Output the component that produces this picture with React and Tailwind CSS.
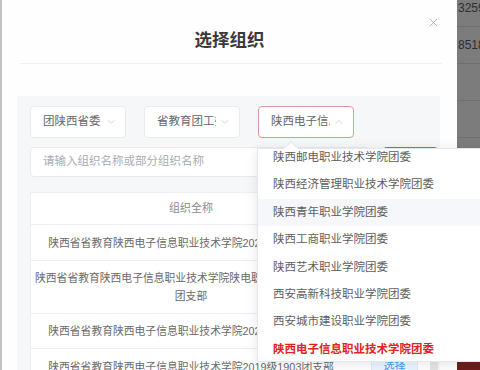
import { ChevronDown, ChevronUp, X } from 'lucide-react'

const font = "font-['Liberation_Sans','Noto_Sans_CJK_SC',sans-serif]"

const rows = [
    { h: 'h-[36px]', lines: ['陕西省省教育陕西电子信息职业技术学院2020级2001团支部'] },
    { h: 'h-[53px]', lines: ['陕西省省教育陕西电子信息职业技术学院陕电职院青年志愿者协会', '团支部'] },
    { h: 'h-[35px]', lines: ['陕西省省教育陕西电子信息职业技术学院2021级2101团支部'] },
    { h: 'h-[36px]', lines: ['陕西省省教育陕西电子信息职业技术学院2019级1903团支部'] },
]

const options = [
    '陕西邮电职业技术学院团委',
    '陕西经济管理职业技术学院团委',
    '陕西青年职业学院团委',
    '陕西工商职业学院团委',
    '陕西艺术职业学院团委',
    '西安高新科技职业学院团委',
    '西安城市建设职业学院团委',
    '陕西电子信息职业技术学院团委',
]

function Select({ label, open }) {
    return (
        <div className={`w-[96px] h-[32px] bg-white rounded-[4px] border flex items-center pl-[12px] pr-[8px] ${open ? 'border-[#dd9a9a]' : 'border-[#ebebeb]'}`}>
            <span className="flex-1 mr-[3px] overflow-hidden whitespace-nowrap text-[11.5px] text-[#666]">{label}</span>
            {open
                ? <ChevronUp className="w-[12px] h-[12px] shrink-0 text-[#c0c4cc]" strokeWidth={1.5} />
                : <ChevronDown className="w-[12px] h-[12px] shrink-0 text-[#c0c4cc]" strokeWidth={1.5} />}
        </div>
    )
}

export default function App() {
    return (
        <div className={`w-[480px] h-[370px] relative overflow-hidden flex bg-white ${font}`}>
            <div className="w-[2px] shrink-0 bg-[#c2c2c2]" />

            {/* Modal */}
            <div className="w-[455px] shrink-0 flex flex-col bg-[#fefefe] overflow-hidden">
                <div className="h-[63px] shrink-0 relative flex justify-center pt-[29px]">
                    <h2 className="text-[17.5px] leading-[22px] font-bold text-[#3a3a3a]">选择组织</h2>
                    <X className="absolute right-[17px] top-[16px] w-[13px] h-[13px] text-[#a6a6a6]" strokeWidth={1.5} />
                </div>
                <div className="ml-[18px] mr-[15px] h-px shrink-0 bg-[#efefef]" />

                <div className="mt-[32px] ml-[15px] w-[423px] shrink-0 bg-[#f6f7f9] pt-[10px] pl-[13px] pr-[2px]">
                    <div className="flex gap-[18px]">
                        <Select label="团陕西省委" />
                        <Select label="省教育团工委" />
                        <Select label="陕西电子信息职业技术学院团委" open />
                    </div>

                    <div className="flex mt-[9px] h-[30px]">
                        <div className="w-[340px] bg-white rounded-[4px] border border-[#ebebeb] flex items-center pl-[12px] text-[11.5px] text-[#a8abb2]">
                            请输入组织名称或部分组织名称
                        </div>
                        <div className="ml-auto w-[55px] bg-[#409eff] rounded-[4px] border-t-2 border-[#3a8ee6]" />
                    </div>

                    <div className="mt-[15px] bg-white border-l border-t border-[#ebeef5]">
                        <div className="grid grid-cols-[320px_1fr] h-[32px] border-b border-[#ebeef5] items-center text-[11px] text-[#8a8a8a]">
                            <div className="text-center">组织全称</div>
                            <div className="text-center">操作</div>
                        </div>
                        {rows.map((r, i) => (
                            <div key={i} className={`grid grid-cols-[320px_1fr] ${r.h} border-b border-[#ebeef5] items-center`}>
                                <div className="text-center text-[10.8px] leading-[18px] text-[#6a6a6a] whitespace-nowrap overflow-hidden px-[4px]">
                                    {r.lines.map((l, j) => <div key={j}>{l}</div>)}
                                </div>
                                <div className="flex items-center gap-[12px] pl-[20px]">
                                    <span className="w-[47px] h-[24px] rounded-[3px] bg-[#ecf5ff] border border-[#d9ecff] text-[#409eff] text-[11px] flex items-center justify-center">选择</span>
                                    <span className="w-[8px] h-[24px] bg-[#e4e4e4]" />
                                </div>
                            </div>
                        ))}
                    </div>
                </div>
            </div>

            {/* background page behind the mask */}
            <div className="flex-1 bg-[#7c7c7c] flex flex-col -mt-[10px] text-[12px] text-[#2e2e2e]">
                {['3259', '8518', '', ''].map((t, i) => (
                    <div key={i} className="h-[37px] shrink-0 border-b border-[#6f6f6f] flex items-center pl-[1px] whitespace-nowrap">{t}</div>
                ))}
                <div className="flex-1" />
                <div className="h-[18px] shrink-0 bg-[#6d1d1d]" />
            </div>

            {/* Dropdown */}
            <div className="absolute left-[257px] top-[148px] w-[240px] h-[214px] bg-white border border-[#e4e7ed] shadow-[0_2px_12px_rgba(0,0,0,0.1)]">
                <div className="absolute -top-[6px] left-[28px] w-[10px] h-[10px] bg-white border-l border-t border-[#e4e7ed] rotate-45" />
                <div className="relative h-full overflow-hidden">
                    <div className="-mt-[5px]">
                        {options.map((o, i) => (
                            <div
                                key={o}
                                className={`h-[27.4px] flex items-center pl-[15px] text-[11.5px] whitespace-nowrap ${i === 2 ? 'bg-[#f5f7fa]' : ''} ${i === 7 ? 'text-[#e0241f] font-bold' : 'text-[#5e5e5e]'}`}
                            >
                                {o}
                            </div>
                        ))}
                    </div>
                </div>
            </div>
        </div>
    )
}
